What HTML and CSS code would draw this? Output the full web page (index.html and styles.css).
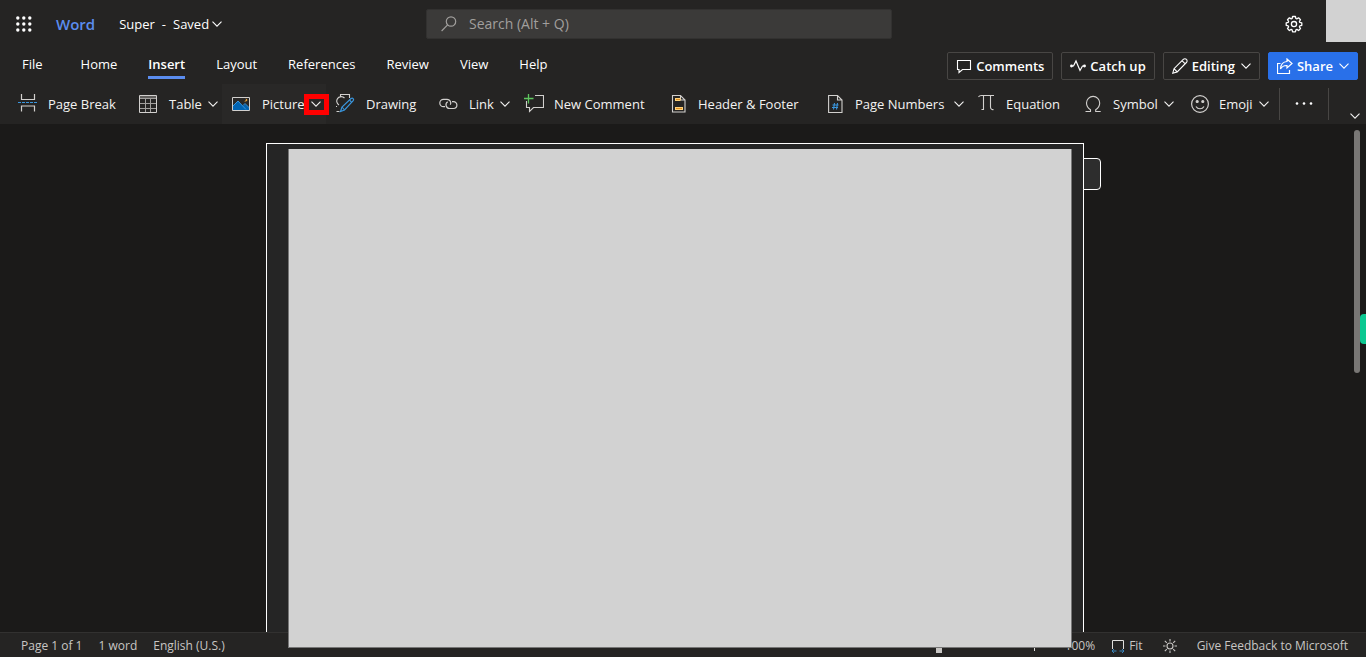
FILE: index.html
```html
<!DOCTYPE html>
<html lang="en">
<head>
<meta charset="utf-8">
<title>Super - Word</title>
<link rel="stylesheet" href="styles.css">
</head>
<body>
<svg class="defs" aria-hidden="true">
  <symbol id="chevron" viewBox="0 0 10 10"><path d="M.5 2.700 5 7.200l4.500-4.500" fill="none" stroke="currentColor" stroke-width="1.100"/></symbol>
</svg>
<header class="header">
  <div class="titlebar">
    <div class="brand">
      <button class="plain launcher" aria-label="App launcher"><svg class="icon-16" viewBox="0 0 16 16" fill="#fff"><circle cx="1.800" cy="2" r="1.700"/><circle cx="7.800" cy="2" r="1.700"/><circle cx="13.800" cy="2" r="1.700"/><circle cx="1.800" cy="8" r="1.700"/><circle cx="7.800" cy="8" r="1.700"/><circle cx="13.800" cy="8" r="1.700"/><circle cx="1.800" cy="14" r="1.700"/><circle cx="7.800" cy="14" r="1.700"/><circle cx="13.800" cy="14" r="1.700"/></svg></button>
      <a class="app-name" href="#">Word</a>
      <button class="plain doc-name"><span>Super</span><span>-</span><span>Saved</span><svg class="chev"><use href="#chevron"/></svg></button>
    </div>
    <label class="search">
      <svg class="icon-16" viewBox="0 0 16 16" fill="none" stroke="#a19f9d" stroke-width="1.200"><circle cx="10" cy="5.500" r="4.700"/><path d="M6.600 8.900.6 15"/></svg>
      <input class="search-box" type="text" placeholder="Search (Alt + Q)" aria-label="Search">
    </label>
    <div class="account">
      <button class="plain" aria-label="Settings"><svg class="icon-18" viewBox="0 0 18 18" fill="none" stroke="#fff" stroke-width="1.300" stroke-linejoin="round"><path d="M7.600 1.500h2.800l.5 2 .9.400 1.800-1.100 1.900 1.900-1.100 1.800.4.900 2 .5v2.400l-2 .6-.4.900 1.100 1.800-1.900 1.900-1.800-1.100-.9.400-.5 2H7.600l-.5-2-.9-.4-1.800 1.100-1.900-1.900 1.100-1.800-.4-.9-2-.6V7.900l2-.5.4-.9-1.100-1.800 1.900-1.900 1.800 1.100.9-.4z"/><circle cx="9" cy="9.100" r="2.600"/></svg></button>
      <div class="avatar"></div>
    </div>
  </div>

  <div class="tabrow">
    <nav class="tabs">
      <button class="plain tab tab-file">File</button>
      <button class="plain tab">Home</button>
      <button class="plain tab active">Insert</button>
      <button class="plain tab">Layout</button>
      <button class="plain tab">References</button>
      <button class="plain tab">Review</button>
      <button class="plain tab">View</button>
      <button class="plain tab">Help</button>
    </nav>
    <div class="actions">
      <button class="action"><svg class="icon-16" viewBox="0 0 16 16" fill="none" stroke="currentColor" stroke-width="1.100"><path d="M1.500 2.500h13v9H6.500l-3.500 3v-3H1.500z"/></svg>Comments</button>
      <button class="action"><svg class="icon-16" viewBox="0 0 16 16" fill="none" stroke="currentColor" stroke-width="1.200"><path d="M1 8h2.500L6 3l4 9.500L12.500 8H15"/><circle cx="1.500" cy="8" r=".8" fill="currentColor"/><circle cx="14.500" cy="8" r=".8" fill="currentColor"/></svg>Catch up</button>
      <button class="action"><svg class="icon-16" viewBox="0 0 16 16" fill="none" stroke="currentColor" stroke-width="1.100"><path d="M.8 15.200 2 10.700 11.300 1.400c.9-.9 2.400-.9 3.100 0 .9.800.9 2.200 0 3.100L5.200 13.900zM10 2.700l3.200 3.200M2 10.700l3.200 3.200"/></svg>Editing<svg class="chev"><use href="#chevron"/></svg></button>
      <button class="action share"><svg class="icon-16" viewBox="0 0 16 16" fill="none" stroke="currentColor" stroke-width="1.200"><path d="M3.500 5.500h-3v10h12V12M10 1l5 4.500-5 4.500V7.500C7 7.300 5 8.500 3.500 11 3.800 6.500 6 3.700 10 3.500z"/></svg>Share<svg class="chev"><use href="#chevron"/></svg></button>
    </div>
  </div>

  <div class="ribbon">
    <button class="plain tool"><svg class="icon-20" viewBox="0 0 20 20" fill="none" stroke="#d2d0ce" stroke-width="1.200"><path d="M3.500 0v5.500h13V0M3.500 17.500v-5.500h13v5.500"/><path d="M0 8.500h20" stroke="#3a96dd" stroke-dasharray="3 1"/></svg>Page Break</button>
    <button class="plain tool menu"><svg class="icon-20" viewBox="0 0 20 20" fill="none" stroke="#d2d0ce"><path d="M1 2h16v2.500H1z" fill="#605e5c" stroke="none"/><path d="M1 4.500h16M1 9.500h16M1 14.500h16M6.500 4.500v14M11.500 4.500v14" stroke="#a19f9d"/><path d="M.5 1.500h17v17H.500z"/></svg>Table<svg class="chev"><use href="#chevron"/></svg></button>
    <div class="split">
      <button class="plain tool"><svg class="icon-20" viewBox="0 0 20 20"><path d="M1 16V12l5-5 5 5 2-2 4.500 4v2z" fill="#0063b1"/><path d="m1 12 5-5 8 8.500M11 11.500l2-2 4.500 4.500" fill="none" stroke="#3a96dd"/><path d="M13.500 4.500c1 1.300.2 2.400-1.300 2.700 1.800.8 3.400-.1 3.100-1.400-.2-.8-.8-1.200-1.800-1.300z" fill="#e8a33d"/><path d="M.5 3.500h17v13H.5z" fill="none" stroke="#d2d0ce"/></svg>Picture</button>
      <button class="plain split-arrow" aria-label="Picture options"><svg class="chev"><use href="#chevron"/></svg><span class="highlight"></span></button>
    </div>
    <button class="plain tool"><svg class="icon-20" viewBox="0 0 20 20" fill="none" stroke="#d2d0ce" stroke-width="1.100"><path d="M4.500 3V.5h9V4M8.500 4A4.500 4.500 0 1 0 3 11M.5 12v1M.5 17.500h3"/><path d="M4.500 17.500 6 13 15 4.500c1.700-1 3.300.6 2.200 2.200L8.500 16z" fill="#252423" stroke="#3a96dd" stroke-width="1.200"/><path d="m6 13 2.500 3M13.500 6l2.200 2.300" stroke="#3a96dd"/></svg>Drawing</button>
    <button class="plain tool menu"><svg class="icon-20" viewBox="0 0 20 20" fill="none" stroke="#d2d0ce" stroke-width="1.200"><path d="M6 12.700H4.500a3.700 3.700 0 0 1 0-7.400H8a3.700 3.700 0 0 1 3.300 5.500M8.700 7.700A3.700 3.700 0 0 0 11 14.500h3.500a3.400 3.400 0 0 0 0-6.800H13"/></svg>Link<svg class="chev"><use href="#chevron"/></svg></button>
    <button class="plain tool"><svg class="icon-20" viewBox="0 0 20 20" fill="none" stroke="#d2d0ce" stroke-width="1.100"><path d="M11 1.500h8.500v12H9.500l-4 4v-4h-3V7"/><path d="M0 4.500h9.500M4.500 0v9.500" stroke="#5ec75e" stroke-width="1.300"/></svg>New Comment</button>
    <button class="plain tool narrow"><svg class="icon-page" viewBox="0 0 15 20" fill="none" stroke="#d2d0ce" stroke-width="1.100"><path d="M1.500 1.500h8l4.500 4.500v12H1.500zM9.500 1.500V6H14"/><path d="M4 5.500h5.500M4 14.500h8" stroke="#ffd37a" stroke-width="3"/><path d="M5 5.500h4M5 14.500h6" stroke="#e08a1e"/></svg>Header &amp; Footer</button>
    <button class="plain tool menu narrow"><svg class="icon-page" viewBox="0 0 15 20" fill="none" stroke="#d2d0ce" stroke-width="1.100"><path d="M.6 1.500h8.900l4.500 4.500v12.500H.600zM9.500 1.500V6H14"/><path d="m6.500 9-1 6.500M9.500 9l-1 6.500M4.500 11H10.500M4 13.500h6" stroke="#3a96dd"/></svg>Page Numbers<svg class="chev"><use href="#chevron"/></svg></button>
    <button class="plain tool tight"><svg class="icon-20" viewBox="0 0 20 20" fill="none" stroke="#d2d0ce" stroke-width="1.100"><path d="M.5 3c.5-1 1.500-1.500 3-1.500H16M5.500 1.500V16M12.500 1.500V13c0 2 1.500 3 3 2.500M3.500 15.500h2"/></svg>Equation</button>
    <button class="plain tool menu tight"><svg class="icon-20" viewBox="0 0 20 20" fill="none" stroke="#d2d0ce" stroke-width="1.100"><path d="M.5 17.500h5v-1.700C3 14 1.500 12 1.500 9a6.600 6.600 0 0 1 13.200 0c0 3-1.500 5-4 6.800v1.700h5"/></svg>Symbol<svg class="chev"><use href="#chevron"/></svg></button>
    <button class="plain tool menu tight"><svg class="icon-20" viewBox="0 0 20 20" fill="none" stroke="#d2d0ce" stroke-width="1.200"><circle cx="9" cy="10" r="8.400"/><path d="M5 12.500c1.800 3 6.200 3 8 0"/><circle cx="6.200" cy="7.500" r="1" fill="#d2d0ce"/><circle cx="11.800" cy="7.500" r="1" fill="#d2d0ce"/></svg>Emoji<svg class="chev"><use href="#chevron"/></svg></button>
    <button class="plain more" aria-label="More options"><svg class="icon-18" viewBox="0 0 18 18" fill="#fff"><circle cx="2" cy="8.500" r="1.300"/><circle cx="9" cy="8.500" r="1.300"/><circle cx="16" cy="8.500" r="1.300"/></svg></button>
    <button class="plain collapse" aria-label="Ribbon display options"><svg class="chev"><use href="#chevron"/></svg></button>
  </div>
</header>

<main class="workspace">
  <section class="page">
    <div class="sheet"></div>
    <button class="comment-tab" aria-label="Comment"></button>
  </section>
  <div class="scrollbar"><div class="thumb"></div></div>
  <div class="side-tab"></div>
</main>

<footer class="status">
  <div class="status-left"><span>Page 1 of 1</span><span>1 word</span><span>English (U.S.)</span></div>
  <div class="status-right">
    <input class="zoom" type="range" min="0" max="100" value="50" aria-label="Zoom">
    <button class="plain plus" aria-label="Zoom in"><svg class="chev" viewBox="0 0 10 10" stroke="#e1dfdd"><path d="M.5 5.500h9M5.500 1v9"/></svg></button>
    <span class="percent">100%</span>
    <button class="plain fit"><svg class="icon-14" viewBox="0 0 14 14" fill="none" stroke="#e1dfdd"><path d="M1.500 10V1.500h11V10"/><path d="M1 12h4.500M8.500 12H13M3 10l-2 2 2 2M11 10l2 2-2 2" stroke="#3a86bd"/></svg>Fit</button>
    <button class="plain sun" aria-label="Switch background"><svg class="icon-14" viewBox="0 0 14 14" fill="none" stroke="#c8c6c4" stroke-width="1.100"><circle cx="7" cy="7" r="3"/><path d="M7 0v2.500M7 11.500V14M0 7h2.500M11.500 7H14M1.800 1.800l2 2M10.200 10.200l2 2M12.200 1.800l-2 2M3.800 10.200l-2 2"/></svg></button>
    <a class="feedback" href="#">Give Feedback to Microsoft</a>
  </div>
</footer>
</body>
</html>
```
FILE: styles.css
```css
* { box-sizing: border-box; }
body {
  margin: 0;
  height: 100vh;
  display: flex;
  flex-direction: column;
  overflow: hidden;
  background: #1b1a19;
  color: #fff;
  font: 13px/20px "Open Sans", "Noto Sans", sans-serif;
}
.defs { position: absolute; width: 0; height: 0; }
svg { display: block; flex: none; }
button { font: inherit; color: inherit; white-space: nowrap; }
a { color: inherit; text-decoration: none; }
.plain { display: flex; align-items: center; padding: 0; border: 0; background: none; }
.chev { width: 10px; height: 10px; }
.icon-14 { width: 14px; height: 14px; }
.icon-16 { width: 16px; height: 16px; }
.icon-18 { width: 18px; height: 18px; }
.icon-20 { width: 20px; height: 20px; }
.icon-page { width: 15px; height: 20px; }

.header { background: #252423; }
.titlebar { display: grid; grid-template-columns: 426px minmax(200px, 466px) 1fr; height: 48px; }
.brand { display: flex; align-items: center; padding-left: 16px; }
.app-name { margin: 0 24px; color: #5b8def; font-size: 15px; font-weight: 600; }
.doc-name { gap: 7px; }
.doc-name .chev { margin-left: -4px; }
.search {
  display: flex; align-items: center; gap: 12px; height: 30px; margin-top: 9px; padding: 0 14px;
  background: #3b3a39; border: 1px solid #323130; border-radius: 2px;
}
.search-box { flex: 1; min-width: 0; padding: 0; border: 0; outline: 0; background: none; color: #fff; font: inherit; font-size: 14px; }
.search-box::placeholder { color: #a19f9d; opacity: 1; }
.account { display: flex; justify-content: flex-end; align-items: center; gap: 23px; }
.avatar { width: 40px; height: 42px; align-self: flex-start; background: #d2d2d2; }

.tabrow { display: flex; justify-content: space-between; height: 36px; padding: 0 8px 0 22px; }
.tabs { display: flex; gap: 31px; height: 32px; }
.tab { height: 32px; position: relative; }
.tab-file { margin-right: 7px; }
.active { font-weight: 600; }
.active::after { content: ""; position: absolute; left: 0; right: 0; bottom: 1px; height: 3px; background: #5b8def; }
.actions { display: flex; gap: 8px; padding-top: 4px; }
.action {
  display: flex; align-items: center; gap: 4px; height: 28px; padding: 0 8px;
  background: none; border: 1px solid #484644; border-radius: 2px; font-weight: 600;
}
.action .chev { margin-left: 2px; }
.share { background: #2970e9; border-color: #2970e9; }

.ribbon {
  display: grid;
  grid-template-columns: 121px 93px 104px 103px 85px 147px 157px 150px 107px 106px 98px 50px 1fr;
  height: 40px;
  padding-left: 8px;
  color: #f3f2f1;
}
.tool { gap: 10px; padding-left: 10px; }
.tool .chev { margin-left: -4px; }
.narrow { gap: 12px; }
.tight { gap: 8px; }
.narrow .chev, .tight .chev { margin-left: -2px; }
.split { display: flex; justify-content: space-between; background: #292827; }
.split-arrow { position: relative; padding-right: 5px; }
.highlight { position: absolute; left: -7px; top: 10px; width: 25px; height: 21px; border: 5px solid #f00; }
.more { align-self: center; justify-content: center; height: 32px; border: solid #484644; border-width: 0 1px; }
.collapse { justify-self: end; align-self: start; padding: 27px 6px 0 0; }

.workspace { flex: 1; min-height: 0; display: flex; position: relative; z-index: 1; padding: 19px 16px 0 0; justify-content: center; }
.page { position: relative; width: 818px; background: #252525; border: 1px solid #fff; border-bottom: 0; }
.sheet { position: absolute; inset: 5px 11px -16px 21px; background: #d2d2d2; border: solid #767676; border-width: 0 1px 1px; }
.comment-tab { position: absolute; left: 100%; top: 14px; width: 18px; height: 32px; padding: 0; background: #2d2d2d; border: 1px solid #fff; border-radius: 0 4px 4px 0; }
.scrollbar { position: absolute; top: 6px; bottom: 0; right: 6px; width: 6px; }
.thumb { height: 243px; border-radius: 3px; background: #797775; }
.side-tab { position: absolute; right: 0; top: 190px; width: 6px; height: 30px; border-radius: 4px 0 0 4px; background: #0bc891; }

.status {
  display: flex; justify-content: space-between; height: 25px; padding: 2px 18px 0 21px;
  background: #252423; border-top: 1px solid #323130; color: #c8c6c4; font-size: 12px;
}
.status-left { display: flex; align-items: center; gap: 16px; }
.status-right { display: flex; align-items: center; }
.zoom { appearance: none; width: 144px; height: 14px; margin: 0 18px 0 0; background: none; }
.zoom::-webkit-slider-thumb { appearance: none; width: 6px; height: 14px; background: #c8c6c4; }
.plus { margin-right: 26px; }
.percent { margin-right: 16px; }
.fit { gap: 4px; margin-right: 20px; }
.sun { margin-right: 20px; }
```
